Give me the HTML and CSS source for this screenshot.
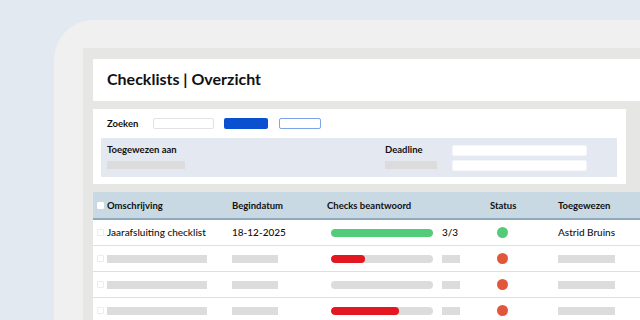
FILE: index.html
```html
<!DOCTYPE html>
<html lang="nl">
<head>
  <meta charset="UTF-8">
  <meta name="viewport" content="width=device-width, initial-scale=1.0">
  <title>Checklists | Overzicht</title>
  <link rel="stylesheet" href="styles.css">
</head>
<body>
  <div class="device">
    <div class="screen">
      <!-- Titel -->
      <div class="page-header">
        <h1>Checklists | Overzicht</h1>
      </div>

      <!-- Filters -->
      <div class="filters">
        <div class="search-row">
          <span class="label">Zoeken</span>
          <span class="input search-input"></span>
          <span class="btn btn-primary"></span>
          <span class="btn btn-outline"></span>
        </div>
        <div class="filter-panel">
          <div class="filter-col">
            <span class="label">Toegewezen aan</span>
            <span class="skeleton sk-assigned"></span>
          </div>
          <div class="filter-col deadline-col">
            <span class="label">Deadline</span>
            <span class="skeleton sk-deadline"></span>
          </div>
          <div class="filter-inputs">
            <span class="input panel-input"></span>
            <span class="input panel-input"></span>
          </div>
        </div>
      </div>

      <!-- Tabel -->
      <div class="table">
        <div class="row head">
          <span class="check check-head"></span>
          <span>Omschrijving</span>
          <span>Begindatum</span>
          <span>Checks beantwoord</span>
          <span>Status</span>
          <span>Toegewezen</span>
        </div>
        <div class="row">
          <span class="check"></span>
          <span class="cell-text">Jaarafsluiting checklist</span>
          <span class="cell-text">18-12-2025</span>
          <span class="checks">
            <span class="bar"><span class="fill green" style="width: 100%"></span></span>
            <span class="count cell-text">3/3</span>
          </span>
          <span><span class="dot green"></span></span>
          <span class="cell-text">Astrid Bruins</span>
        </div>
        <div class="row">
          <span class="check"></span>
          <span class="skeleton sk-desc"></span>
          <span class="skeleton sk-date"></span>
          <span class="checks">
            <span class="bar"><span class="fill red" style="width: 33%"></span></span>
            <span class="skeleton sk-count"></span>
          </span>
          <span><span class="dot orange"></span></span>
          <span class="skeleton sk-name"></span>
        </div>
        <div class="row">
          <span class="check"></span>
          <span class="skeleton sk-desc"></span>
          <span class="skeleton sk-date"></span>
          <span class="checks">
            <span class="bar"></span>
            <span class="skeleton sk-count"></span>
          </span>
          <span><span class="dot orange"></span></span>
          <span class="skeleton sk-name"></span>
        </div>
        <div class="row">
          <span class="check"></span>
          <span class="skeleton sk-desc"></span>
          <span class="skeleton sk-date"></span>
          <span class="checks">
            <span class="bar"><span class="fill red" style="width: 67%"></span></span>
            <span class="skeleton sk-count"></span>
          </span>
          <span><span class="dot orange"></span></span>
          <span class="skeleton sk-name"></span>
        </div>
      </div>
    </div>
  </div>
</body>
</html>
```

FILE: styles.css
```css
/* basis */
body {
  margin: 0;
  padding: 0;
  background: #e3e9f0;
  font-family: Lato, "Liberation Sans", sans-serif;
  color: #111;
  height: 320px;
  overflow: hidden;
}
.device {
  margin: 20px 0 0 54px;
  padding: 28px 0 0 29px;
  background: #f0f0f0;
  border-top-left-radius: 40px;
  height: 300px;
  box-sizing: border-box;
}
.screen {
  background: #e6e6e4;
  padding: 11px 0 0 10px;
  height: 100%;
  box-sizing: border-box;
  display: flex;
  flex-direction: column;
  gap: 8px;
}
.screen > div {
  flex-shrink: 0;
}
/* titel */
.page-header {
  background: #fff;
  height: 42px;
  box-sizing: border-box;
  padding: 0 0 3px 14px;
  display: flex;
  align-items: center;
}
.page-header h1 {
  margin: 0;
  font-size: 16px;
  font-weight: 700;
}
/* filters */
.filters {
  background: #fff;
  margin-right: 14px;
  height: 75px;
  box-sizing: border-box;
  padding: 9px 9px 7px 8px;
  display: flex;
  flex-direction: column;
  gap: 9px;
}
.label {
  font-size: 9.5px;
  font-weight: 700;
}
.search-row {
  display: flex;
  align-items: center;
  height: 11px;
  padding-left: 6px;
}
.search-row .label {
  width: 46px;
}
.input {
  display: block;
  background: #fff;
  border: 1px solid #e2e2e2;
  border-radius: 2px;
  box-sizing: border-box;
}
.search-input {
  width: 61px;
  height: 11px;
}
.btn {
  display: block;
  height: 11px;
  border-radius: 2px;
  box-sizing: border-box;
}
.btn-primary {
  width: 44px;
  margin-left: 10px;
  background: #0a51d1;
}
.btn-outline {
  width: 42px;
  margin-left: 11px;
  border: 1px solid #7ea3e6;
  background: #fff;
}
.filter-panel {
  flex: 1;
  background: #e4e9f1;
  display: flex;
  padding: 6px 0 0 6px;
}
.filter-col {
  display: flex;
  flex-direction: column;
  gap: 5px;
}
.filter-col .label {
  height: 12px;
  line-height: 12px;
}
.deadline-col {
  margin-left: 200px;
}
.filter-inputs {
  margin-left: 15px;
  display: flex;
  flex-direction: column;
  gap: 4px;
  padding-top: 1px;
}
.panel-input {
  width: 135px;
  height: 11px;
  border-color: #f4f6f9;
}
.skeleton {
  display: block;
  height: 8px;
  background: #dcdcdc;
}
.sk-assigned { width: 78px; }
.sk-deadline { width: 52px; }
/* tabel */
.table {
  background: #fff;
  flex: 1;
}
.row {
  display: grid;
  grid-template-columns: 10px 125px 95px 163px 68px 1fr;
  align-items: center;
  height: 25px;
  padding-left: 4px;
  border-bottom: 1px solid #dfdfdf;
  font-size: 10px;
  font-weight: 500;
}
.cell-text {
  padding-bottom: 2px;
}
.row.head {
  height: 26px;
  background: #c9d9e3;
  border-bottom: 2px solid #8ea8bc;
  font-size: 9.5px;
  font-weight: 700;
}
.check {
  width: 7px;
  height: 7px;
  border: 1px solid #ececec;
  border-radius: 1px;
  box-sizing: border-box;
}
.check-head {
  background: #fff;
  border-color: #fff;
}
.checks {
  display: flex;
  align-items: center;
  padding-left: 4px;
}
.bar {
  display: block;
  width: 102px;
  height: 8px;
  border-radius: 4px;
  background: #dcdcdc;
  overflow: hidden;
}
.fill {
  display: block;
  height: 100%;
  border-radius: 4px;
}
.fill.green { background: #52cc79; }
.fill.red { background: #e2171f; }
.count {
  margin-left: 9px;
}
.sk-count {
  width: 18px;
  margin-left: 9px;
}
.sk-desc { width: 100px; }
.sk-date { width: 46px; }
.sk-name { width: 57px; }
.dot {
  display: block;
  width: 11px;
  height: 11px;
  border-radius: 50%;
  margin-left: 7px;
}
.dot.green { background: #52cc79; }
.dot.orange { background: #e2573a; }
```
